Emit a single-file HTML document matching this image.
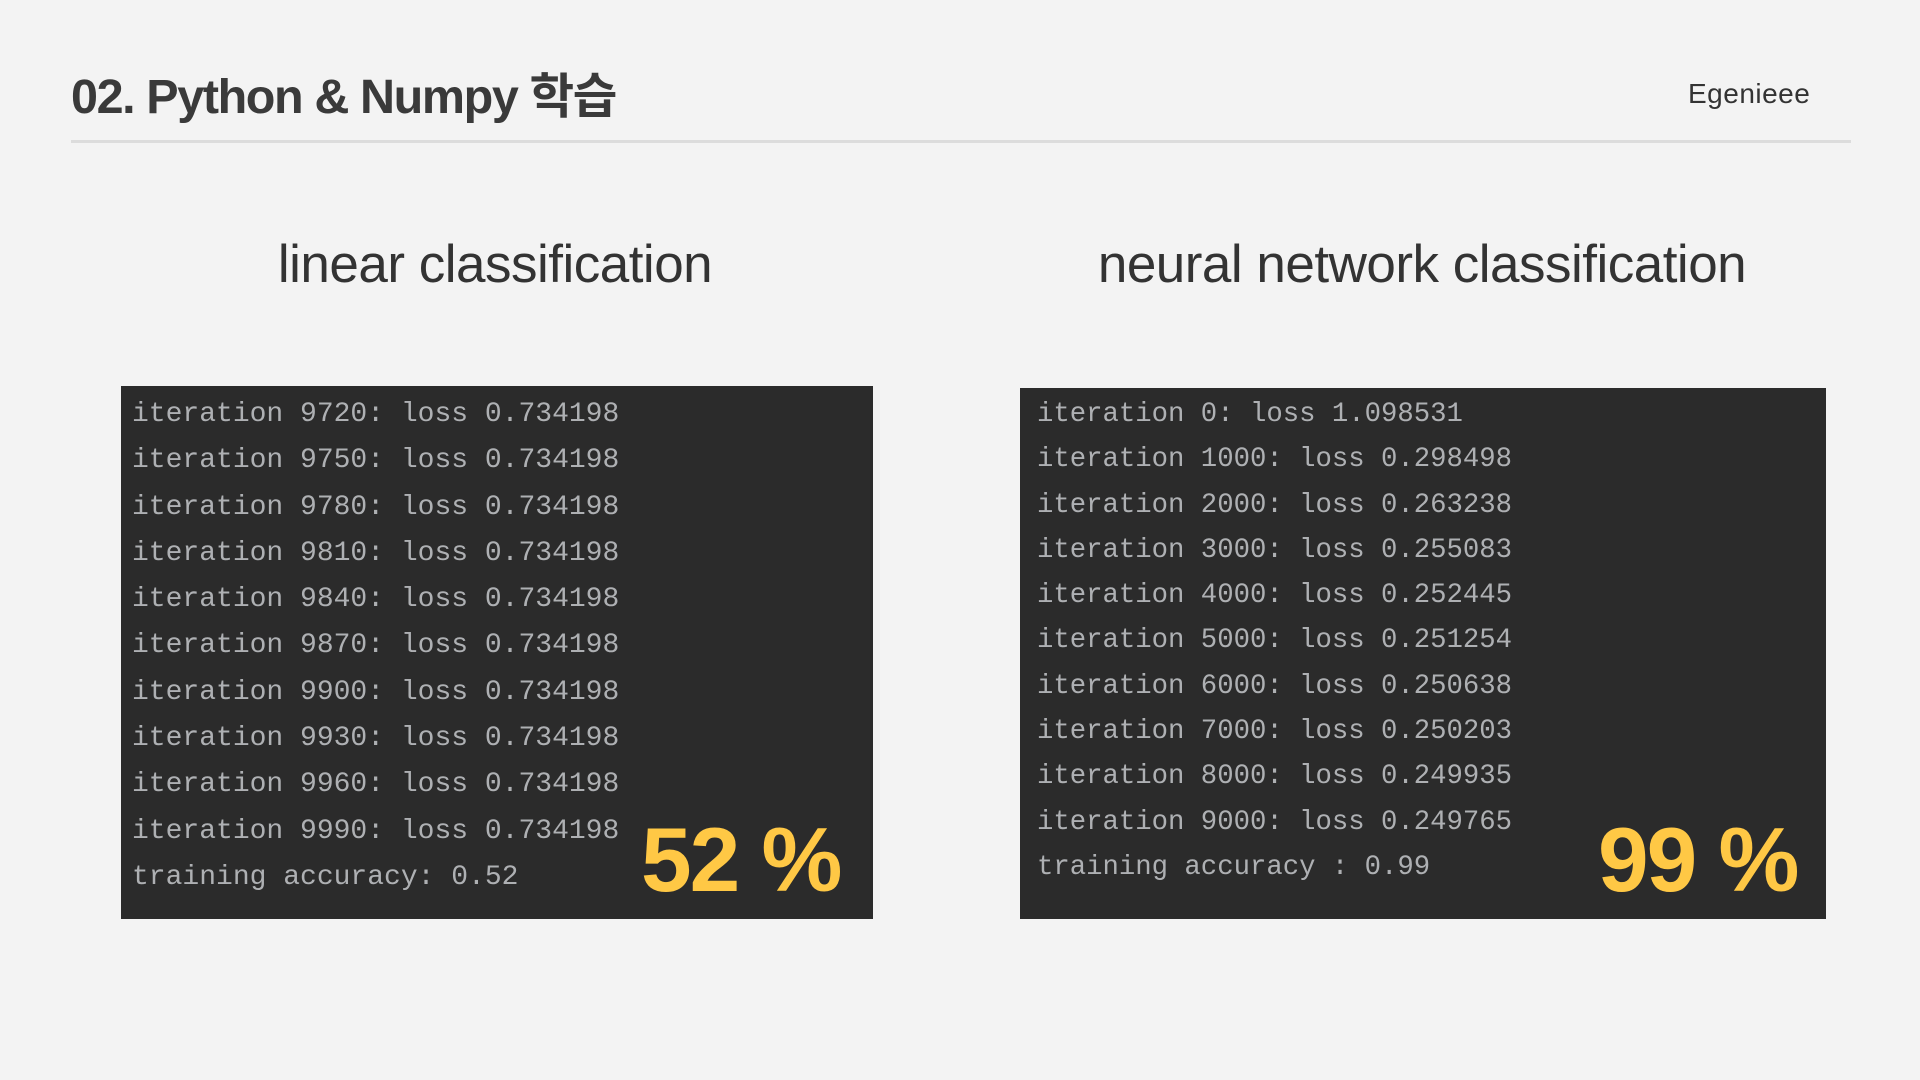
<!DOCTYPE html>
<html><head><meta charset="utf-8"><style>
html,body{margin:0;padding:0;width:1920px;height:1080px;overflow:hidden;background:#f3f3f3;}
body{position:relative;font-family:"Liberation Sans","Noto Sans CJK KR",sans-serif;color:#333;}
.title{position:absolute;left:71px;top:67px;font-size:48.5px;line-height:60px;font-weight:bold;color:#3a3a3a;letter-spacing:-1.4px;white-space:nowrap;}
.logo{position:absolute;left:1688px;top:78px;font-size:28px;color:#333;letter-spacing:0.5px;}
.rule{position:absolute;left:71px;top:140px;width:1780px;height:3px;background:#dcdcdc;}
.sub{position:absolute;top:234px;font-size:53px;color:#333;white-space:nowrap;transform:translateX(-50%);letter-spacing:-0.5px;}
.panel{position:absolute;background:#2b2b2b;}
.code{position:absolute;font-family:"Liberation Mono",monospace;color:#aeb0b3;white-space:pre;}
.big{position:absolute;font-weight:bold;font-size:91px;line-height:91px;color:#ffc845;white-space:nowrap;letter-spacing:-2px;}
</style></head><body>
<div class="title">02. Python &amp; Numpy 학습</div>
<div class="logo">Egenieee</div>
<div class="rule"></div>
<div class="sub" style="left:495px">linear classification</div>
<div class="sub" style="left:1422px">neural network classification</div>

<div class="panel" style="left:121px;top:386px;width:752px;height:533px"></div>
<div class="code" style="left:132px;top:392px;font-size:28px;line-height:46.3px">iteration 9720: loss 0.734198
iteration 9750: loss 0.734198
iteration 9780: loss 0.734198
iteration 9810: loss 0.734198
iteration 9840: loss 0.734198
iteration 9870: loss 0.734198
iteration 9900: loss 0.734198
iteration 9930: loss 0.734198
iteration 9960: loss 0.734198
iteration 9990: loss 0.734198
training accuracy: 0.52</div>
<div class="big" style="left:641px;top:815px">52 %</div>

<div class="panel" style="left:1020px;top:388px;width:806px;height:531px"></div>
<div class="code" style="left:1037px;top:392px;font-size:27.3px;line-height:45.3px">iteration 0: loss 1.098531
iteration 1000: loss 0.298498
iteration 2000: loss 0.263238
iteration 3000: loss 0.255083
iteration 4000: loss 0.252445
iteration 5000: loss 0.251254
iteration 6000: loss 0.250638
iteration 7000: loss 0.250203
iteration 8000: loss 0.249935
iteration 9000: loss 0.249765
training accuracy : 0.99</div>
<div class="big" style="left:1598px;top:815px">99 %</div>
</body></html>
